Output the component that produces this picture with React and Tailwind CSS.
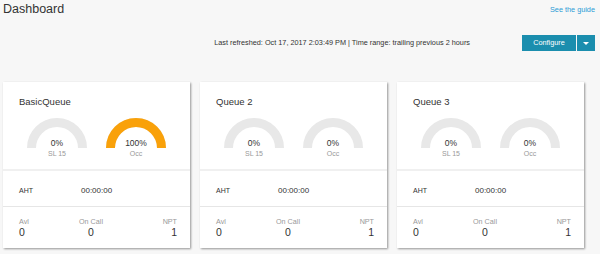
import React from 'react';

const queues = [
  { name: 'BasicQueue', sl: 0, occ: 100, aht: '00:00:00', avl: 0, onCall: 0, npt: 1 },
  { name: 'Queue 2', sl: 0, occ: 0, aht: '00:00:00', avl: 0, onCall: 0, npt: 1 },
  { name: 'Queue 3', sl: 0, occ: 0, aht: '00:00:00', avl: 0, onCall: 0, npt: 1 },
];

function Gauge({ value, label }) {
  // semicircle, radius 25.5, stroke 9 -> outer 30
  const len = Math.PI * 25.5;
  return (
    <div className="flex flex-col items-center w-[60px]">
      <div className="relative w-[60px] h-[30px]">
        <svg width="60" height="30" viewBox="0 0 60 30">
          <path d="M4.5 30 A25.5 25.5 0 0 1 55.5 30" fill="none" stroke="#e8e8e8" strokeWidth="9" />
          {value > 0 && (
            <path
              d="M4.5 30 A25.5 25.5 0 0 1 55.5 30"
              fill="none"
              stroke="#f9a10a"
              strokeWidth="9"
              strokeDasharray={`${(len * value) / 100} ${len}`}
            />
          )}
        </svg>
        <div className="absolute left-0 right-0 top-[20px] text-center text-[8.5px] leading-[11px] text-[#333]">
          {value}%
        </div>
      </div>
      <div className="mt-[1px] text-[7px] leading-[9px] text-[#999]">{label}</div>
    </div>
  );
}

function QueueCard({ q }) {
  return (
    <div className="w-[187px] h-[166px] bg-white shadow-[1px_1px_2px_rgba(0,0,0,0.4)] flex flex-col">
      <div className="h-[87px] pt-[14px]">
        <div className="pl-[16px] text-[9.5px] leading-[12px] text-[#333]">{q.name}</div>
        <div className="mt-[10px] flex justify-center gap-[19px]">
          <Gauge value={q.sl} label="SL 15" />
          <Gauge value={q.occ} label="Occ" />
        </div>
      </div>
      <div className="h-[2px] bg-[#f0f0f0]" />
      <div className="h-[35px] flex items-center pt-[5px] pl-[16px] text-[#333]">
        <div className="w-[62px] text-[7px]">AHT</div>
        <div className="text-[8px]">{q.aht}</div>
      </div>
      <div className="h-[1px] bg-[#e6e6e6]" />
      <div className="grid grid-cols-[60px_24px_1fr] pl-[16px] pr-[13px] pt-[10px]">
        <div className="flex flex-col items-start">
          <span className="text-[7.2px] leading-[9px] text-[#999]">Avl</span>
          <span className="text-[10.5px] leading-[12px] text-[#333]">{q.avl}</span>
        </div>
        <div className="flex flex-col items-center">
          <span className="text-[7.2px] leading-[9px] text-[#999] whitespace-nowrap">On Call</span>
          <span className="text-[10.5px] leading-[12px] text-[#333]">{q.onCall}</span>
        </div>
        <div className="flex flex-col items-end">
          <span className="text-[7.2px] leading-[9px] text-[#999]">NPT</span>
          <span className="text-[10.5px] leading-[12px] text-[#333]">{q.npt}</span>
        </div>
      </div>
    </div>
  );
}

export default function App() {
  return (
    <div className="w-[600px] h-[254px] overflow-hidden bg-[#f7f7f7] font-['Liberation_Sans',Arial,sans-serif]">
      <div className="flex justify-between items-start pl-[3px] pr-[5px] pt-[1px]">
        <h1 className="text-[12.5px] leading-[16px] text-[#333]">Dashboard</h1>
        <a className="mt-[4px] text-[7.3px] leading-[10px] text-[#2a9bd6]">See the guide</a>
      </div>
      <div className="mt-[18px] flex justify-end items-center pr-[5px]">
        <div className="text-[7.3px] leading-[10px] text-[#333] mr-[52px]">
          Last refreshed: Oct 17, 2017 2:03:49 PM | Time range: trailing previous 2 hours
        </div>
        <div className="flex h-[16px]">
          <button className="w-[54px] h-[16px] bg-[#1b8eae] text-white text-[7.3px]">Configure</button>
          <button className="ml-[1px] w-[18px] h-[16px] bg-[#1b8eae] flex items-center justify-center">
            <span className="block w-0 h-0 border-l-[3px] border-r-[3px] border-t-[3px] border-l-transparent border-r-transparent border-t-white" />
          </button>
        </div>
      </div>
      <div className="mt-[31px] flex gap-[10px] pl-[3px]">
        {queues.map((q) => (
          <QueueCard key={q.name} q={q} />
        ))}
      </div>
    </div>
  );
}
